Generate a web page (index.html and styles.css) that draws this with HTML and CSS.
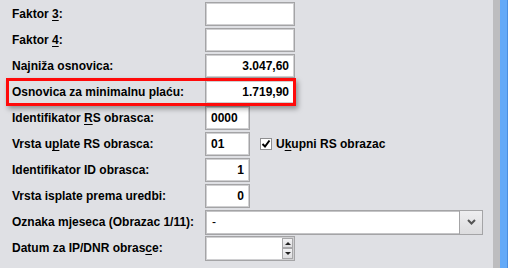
FILE: index.html
```html
<!DOCTYPE html>
<html lang="hr">

<head>
    <meta charset="UTF-8">
    <title>Parametri obračuna</title>
    <link rel="stylesheet" href="styles.css">
</head>

<body>
    <div class="window">
        <main class="form">
            <label class="field-label">Faktor <u>3</u>:</label>
            <div class="control"><div class="text-field wide"></div></div>

            <label class="field-label">Faktor <u>4</u>:</label>
            <div class="control"><div class="text-field wide"></div></div>

            <label class="field-label">Najniža osnovica:</label>
            <div class="control"><div class="text-field wide right">3.047,60</div></div>

            <label class="field-label">Osnovica za minimalnu plaću:</label>
            <div class="control"><div class="text-field wide right">1.719,90</div></div>

            <label class="field-label">Identifikator <u>R</u>S obrasca:</label>
            <div class="control"><div class="text-field short">0000</div></div>

            <label class="field-label">Vrsta u<u>p</u>late RS obrasca:</label>
            <div class="control">
                <div class="text-field short">01</div>
                <div class="check">
                    <span class="check-box">
                        <svg width="10" height="10" viewBox="0 0 10 10">
                            <path d="M1.5 5 L4 7.5 L8.5 1.5" fill="none" stroke="#000" stroke-width="2"/>
                        </svg>
                    </span>
                    <span>U<u>k</u>upni RS obrazac</span>
                </div>
            </div>

            <label class="field-label">Identifikator ID obrasca:</label>
            <div class="control"><div class="text-field short right">1</div></div>

            <label class="field-label">Vrsta isplate prema uredbi:</label>
            <div class="control"><div class="text-field short right">0</div></div>

            <label class="field-label">Oznaka mjeseca (Obrazac 1/11):</label>
            <div class="control">
                <div class="combo">
                    <span class="combo-value">-</span>
                    <span class="combo-button">
                        <svg width="9" height="6" viewBox="0 0 9 6">
                            <path d="M1 1 L4.5 4.5 L8 1" fill="none" stroke="#555" stroke-width="2"/>
                        </svg>
                    </span>
                </div>
            </div>

            <label class="field-label">Datum za IP/DNR obras<u>c</u>e:</label>
            <div class="control">
                <div class="spinner">
                    <span class="spinner-value"></span>
                    <span class="spinner-buttons">
                        <span class="spin up"></span>
                        <span class="spin down"></span>
                    </span>
                </div>
            </div>
        </main>
        <div class="edge"></div>
        <div class="bar"></div>

        <div class="highlight"></div>
    </div>
</body>

</html>
```

FILE: styles.css
```css
:root {
    --panel: #dfe0e4;
    --field-border: #a4a4a6;
    --edge: #bdbdbf;
    --blue: #64aaf8;
    --mark: #ff0a0a;
}

* {
    margin: 0;
    padding: 0;
    box-sizing: border-box;
}

html,
body {
    width: 508px;
    height: 268px;
    overflow: hidden;
}

body {
    background-color: var(--panel);
    font-family: 'Liberation Sans', Arial, sans-serif;
    font-size: 12px;
    font-weight: bold;
    color: #000;
}

.window {
    position: relative;
    display: flex;
    height: 268px;
}

.form {
    width: 493px;
    display: grid;
    grid-template-columns: 193px 1fr;
    grid-auto-rows: 24px;
    row-gap: 2px;
    padding: 2px 0 0 12px;
    align-items: center;
}

.field-label u,
.check u {
    text-underline-offset: 2px;
}

.control {
    display: flex;
    align-items: center;
    height: 24px;
}

.text-field {
    height: 24px;
    background-color: #fff;
    border: 1px solid var(--field-border);
    box-shadow: inset 0 0 0 1px #d0d0d2;
    padding: 0 5px;
    line-height: 22px;
}

.text-field.wide {
    width: 90px;
}

.text-field.short {
    width: 45px;
}

.text-field.right {
    text-align: right;
}

.check {
    display: flex;
    align-items: center;
    gap: 4px;
    margin-left: 10px;
}

.check-box {
    width: 12px;
    height: 12px;
    border: 1px solid #8e8e90;
    background-color: #fff;
    display: flex;
    align-items: center;
    justify-content: center;
}

.combo {
    width: 278px;
    height: 25px;
    display: flex;
    background-color: #fff;
    border: 1px solid var(--field-border);
    box-shadow: inset 0 0 0 1px #c4c4c6;
}

.combo-value {
    flex: 1;
    padding-left: 6px;
    line-height: 22px;
    font-weight: normal;
}

.combo-button {
    width: 23px;
    border-left: 1px solid var(--field-border);
    background: linear-gradient(#eeeef0, #dcdcde);
    display: flex;
    align-items: center;
    justify-content: center;
}

.spinner {
    width: 90px;
    height: 25px;
    display: flex;
    background-color: #fff;
    border: 1px solid var(--field-border);
    box-shadow: inset 0 0 0 1px #d0d0d2;
}

.spinner-value {
    flex: 1;
}

.spinner-buttons {
    width: 12px;
    display: flex;
    flex-direction: column;
    padding: 1px 1px 1px 0;
}

.spin {
    flex: 1;
    position: relative;
    border: 1px solid #a8a8aa;
    background: linear-gradient(#f2f2f4, #dedee0);
}

.spin::after {
    content: "";
    position: absolute;
    left: 2px;
    border-left: 3px solid transparent;
    border-right: 3px solid transparent;
}

.spin.up::after {
    top: 3px;
    border-bottom: 3px solid #222;
}

.spin.down::after {
    top: 3px;
    border-top: 3px solid #222;
}

.edge {
    width: 7px;
    background-color: var(--edge);
}

.bar {
    width: 8px;
    background-color: var(--blue);
    border-right: 1px solid #4b8fe0;
}

/* annotation frame drawn over the row */
.highlight {
    position: absolute;
    left: 6px;
    top: 78px;
    width: 290px;
    height: 28px;
    border: 3px solid var(--mark);
    box-shadow: 2px 3px 5px rgba(0, 0, 0, 0.35);
}
```
